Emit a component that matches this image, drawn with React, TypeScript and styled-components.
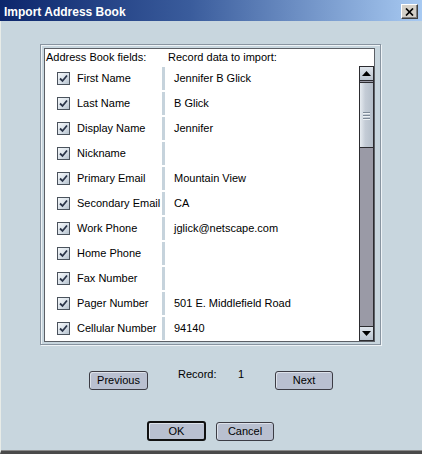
import React from "react";
import styled, { createGlobalStyle } from "styled-components";

const Global = createGlobalStyle`
  html, body { margin: 0; padding: 0; background: #c8d6de; }
  body { font-family: "Liberation Sans", Arial, sans-serif; font-size: 11px; color: #000; }
  * { box-sizing: border-box; }
`;

const Window = styled.div`
  width: 422px;
  height: 454px;
  display: flex;
  flex-direction: column;
  background: #c8d6de;
`;

const TitleBar = styled.div`
  height: 21px;
  flex: none;
  display: flex;
  align-items: flex-start;
  justify-content: space-between;
  background: linear-gradient(to right, #0c266c 0%, #3a5c9c 45%, #a8caf2 100%);
`;

const Title = styled.div`
  padding: 5px 0 0 4px;
  line-height: 14px;
  font-size: 12px;
  font-weight: bold;
  color: #fff;
`;

const CloseButton = styled.div`
  width: 17px;
  height: 15px;
  margin: 4px 4px 0 0;
  background: #d4d0c8;
  border-top: 1px solid #fff;
  border-left: 1px solid #fff;
  border-right: 1px solid #404040;
  border-bottom: 1px solid #404040;
  box-shadow: inset -1px -1px 0 #808080;
  display: flex;
  align-items: center;
  justify-content: center;
`;

const Body = styled.div`
  flex: 1;
  display: flex;
  flex-direction: column;
  border-left: 1px solid #e8ece8;
  border-bottom: 3px solid #4a4a4a;
  box-shadow: inset 0 -1px 0 #8a8a8a;
`;

const Frame = styled.div`
  width: 341px;
  height: 301px;
  margin: 23px 0 0 39px;
  padding: 3px 5px 2px 3px;
  border: 1px solid #8894a0;
  box-shadow: inset 1px 1px 0 #eef3f6, 1px 1px 0 #eef3f6;
`;

const ListBox = styled.div`
  height: 100%;
  display: flex;
  flex-direction: column;
  background: #fff;
  border: 1px solid #5c6066;
`;

const HeaderRow = styled.div`
  height: 17px;
  flex: none;
  display: flex;
  padding-top: 2px;
  line-height: 13px;
`;

const HeaderCell = styled.div<{ $w?: number; $pl: number }>`
  width: ${(p) => (p.$w ? `${p.$w}px` : "auto")};
  padding-left: ${(p) => p.$pl}px;
  white-space: nowrap;
`;

const ListArea = styled.div`
  flex: 1;
  display: flex;
`;

const Rows = styled.div`
  flex: 1;
  display: flex;
  flex-direction: column;
`;

const Row = styled.div`
  height: 25px;
  display: flex;
  align-items: stretch;
  line-height: 13px;
`;

const FieldCell = styled.label`
  width: 117px;
  flex: none;
  display: flex;
  align-items: center;
  gap: 7px;
  padding-left: 12px;
  white-space: nowrap;
`;

const Check = styled.span`
  width: 13px;
  height: 13px;
  flex: none;
  border: 1px solid #4a525c;
  background: linear-gradient(135deg, #f4f7f9 0%, #d8e0e8 55%, #b4c0cc 100%);
  display: flex;
  align-items: center;
  justify-content: center;
`;

const Divider = styled.span`
  width: 3px;
  flex: none;
  margin: 1px 0;
  background: #c6d3dc;
`;

const ValueCell = styled.div`
  flex: 1;
  display: flex;
  align-items: center;
  padding-left: 9px;
  white-space: nowrap;
  overflow: hidden;
`;

const ScrollBar = styled.div`
  width: 15px;
  flex: none;
  display: flex;
  flex-direction: column;
  background: #9a9aa6;
  border: 1px solid #2c2c30;
`;

const ArrowButton = styled.div<{ $down?: boolean }>`
  height: 14px;
  flex: none;
  display: flex;
  align-items: center;
  justify-content: center;
  background: linear-gradient(to bottom, #dfe5ec, #b9c3ce);
  ${(p) =>
    p.$down
      ? "margin-top: auto; border-top: 1px solid #2c2c30;"
      : "border-bottom: 1px solid #2c2c30;"}
`;

const Thumb = styled.div`
  height: 66px;
  flex: none;
  margin-top: 1px;
  border-top: 1px solid #2c2c30;
  border-bottom: 1px solid #2c2c30;
  background: linear-gradient(to right, #e6ebf0, #c4ccd6 40%, #b4bec9);
  display: flex;
  flex-direction: column;
  align-items: center;
  justify-content: center;
  gap: 2px;
`;

const Grip = styled.span`
  width: 7px;
  height: 1px;
  background: #7e8a98;
  box-shadow: 0 1px 0 #eef2f5;
`;

const NavRow = styled.div`
  display: flex;
  align-items: flex-start;
  margin-top: 23px;
  padding-left: 88px;
`;

const Button = styled.button<{ $w: number; $default?: boolean }>`
  width: ${(p) => p.$w}px;
  height: ${(p) => (p.$default ? 20 : 19)}px;
  padding: 0;
  font-family: "Liberation Sans", Arial, sans-serif;
  font-size: 11px;
  color: #000;
  background: #b9c0d0;
  border: ${(p) => (p.$default ? "2px solid #111" : "1px solid #3c3c44")};
  border-radius: 3px;
  box-shadow: inset 1px 1px 0 #dde2ea;
  line-height: 13px;
`;

const NavButton = styled(Button)`
  margin-top: 3px;
`;

const RecordInfo = styled.div`
  width: 127px;
  display: flex;
  padding-left: 30px;
  line-height: 13px;
`;

const RecordLabel = styled.span`
  width: 60px;
`;

const ButtonRow = styled.div`
  display: flex;
  align-items: center;
  gap: 10px;
  margin-top: 31px;
  padding-left: 146px;
`;

const rows: [string, string][] = [
  ["First Name", "Jennifer B Glick"],
  ["Last Name", "B Glick"],
  ["Display Name", "Jennifer"],
  ["Nickname", ""],
  ["Primary Email", "Mountain View"],
  ["Secondary Email", "CA"],
  ["Work Phone", "jglick@netscape.com"],
  ["Home Phone", ""],
  ["Fax Number", ""],
  ["Pager Number", "501 E. Middlefield Road"],
  ["Cellular Number", "94140"],
];

const CheckMark = () => (
  <svg width="9" height="9" viewBox="0 0 9 9">
    <path d="M1 4.5 L3.5 7 L8 1.5" fill="none" stroke="#2a3448" strokeWidth="1.8" />
  </svg>
);

export default function App() {
  return (
    <>
      <Global />
      <Window>
        <TitleBar>
          <Title>Import Address Book</Title>
          <CloseButton>
            <svg width="9" height="8" viewBox="0 0 9 8">
              <path d="M1 0.5 L8 7.5 M8 0.5 L1 7.5" stroke="#000" strokeWidth="1.7" />
            </svg>
          </CloseButton>
        </TitleBar>
        <Body>
          <Frame>
            <ListBox>
              <HeaderRow>
                <HeaderCell $w={123} $pl={1}>Address Book fields:</HeaderCell>
                <HeaderCell $pl={0}>Record data to import:</HeaderCell>
              </HeaderRow>
              <ListArea>
                <Rows>
                  {rows.map(([field, value]) => (
                    <Row key={field}>
                      <FieldCell>
                        <Check>
                          <CheckMark />
                        </Check>
                        {field}
                      </FieldCell>
                      <Divider />
                      <ValueCell>{value}</ValueCell>
                    </Row>
                  ))}
                </Rows>
                <ScrollBar>
                  <ArrowButton>
                    <svg width="9" height="5" viewBox="0 0 9 5">
                      <path d="M0 5 L4.5 0 L9 5 Z" fill="#000" />
                    </svg>
                  </ArrowButton>
                  <Thumb>
                    <Grip />
                    <Grip />
                    <Grip />
                  </Thumb>
                  <ArrowButton $down>
                    <svg width="9" height="5" viewBox="0 0 9 5">
                      <path d="M0 0 L9 0 L4.5 5 Z" fill="#000" />
                    </svg>
                  </ArrowButton>
                </ScrollBar>
              </ListArea>
            </ListBox>
          </Frame>
          <NavRow>
            <NavButton $w={59}>Previous</NavButton>
            <RecordInfo>
              <RecordLabel>Record:</RecordLabel>
              <span>1</span>
            </RecordInfo>
            <NavButton $w={58}>Next</NavButton>
          </NavRow>
          <ButtonRow>
            <Button $w={59} $default>OK</Button>
            <Button $w={58}>Cancel</Button>
          </ButtonRow>
        </Body>
      </Window>
    </>
  );
}
